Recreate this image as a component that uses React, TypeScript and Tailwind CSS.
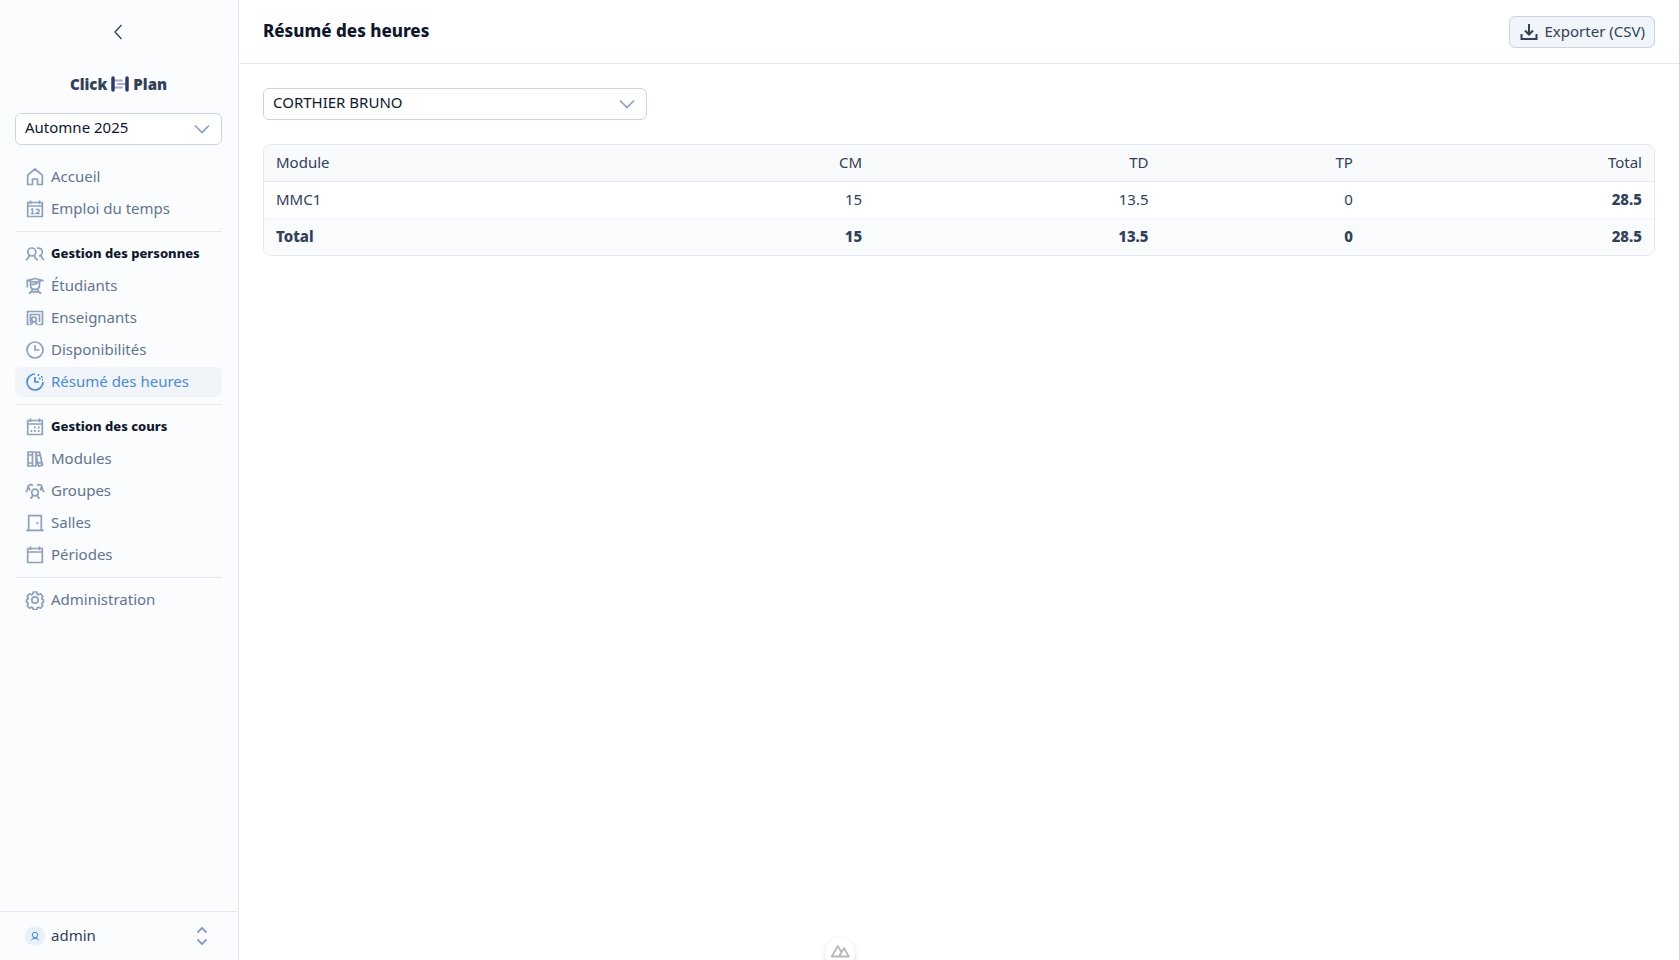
import type { ReactNode } from "react";

function Icon({ children, className = "size-5" }: { children: ReactNode; className?: string }) {
  return (
    <svg
      viewBox="0 0 20 20"
      fill="none"
      stroke="currentColor"
      strokeWidth="1.7"
      className={`shrink-0 ${className}`}
      aria-hidden="true"
    >
      {children}
    </svg>
  );
}

const calendarFrame = <path d="M2.700 3.500h14.600v14H2.700zM2.700 7h14.600M5.500 1.500v3.500M14.500 1.500v3.500" strokeLinejoin="round" />;

const icons = {
  home: <path d="M2.700 8.200L10 2l7.300 6.200v9.300H12.500v-5.500h-5v5.500H2.700z" strokeLinejoin="round" />,
  schedule: (
    <>
      {calendarFrame}
      <path d="M6 10.700l1.500-.7v5M5.800 14.500h3.400M11 11.300c0-1.500 3.200-1.500 3.200.2 0 1.200-1.800 1.800-3 3H14.700" strokeWidth="1.500" />
    </>
  ),
  people: (
    <>
      <circle cx="6.800" cy="8" r="4" />
      <path d="M4.200 11.300c-.4 2.600-1.500 3.800-3.500 4.700M9.400 11.300c.4 2.600 1.500 3.800 3.500 4.700M12 4.300c2.800-1 5.300 1 5.300 3.700 0 2.200-1.300 3.700-3.300 4M16 11.500c.4 2.400 1.300 3.600 3.300 4.500" />
    </>
  ),
  student: (
    <>
      <path d="M2 4.500L10 2.500l8 2-8 1.700zM2.300 5v6.500M5.500 5.500v4c0 5.200 9 5.200 9 0v-4" strokeLinejoin="round" />
      <path d="M5.800 8.200c2.500.5 5.500-.2 7-1.700M7.700 13c-.4 2.600-1.700 3.700-4 4.500M12.300 13c.4 2.600 1.700 3.700 4 4.500M7.500 16.700c1.500-1.400 3.500-1.400 5 0" />
    </>
  ),
  teacher: (
    <>
      <path d="M4.500 16.500h-2v-13h15v13h-4M5.500 15V6.500h9V14" strokeLinejoin="round" />
      <circle cx="9" cy="11.500" r="2.300" />
      <path d="M7.700 13.300c-.2 1.900-1 2.900-2.400 3.500M10.300 13.300c.2 1.900 1 2.900 2.400 3.500" />
    </>
  ),
  clock: (
    <>
      <circle cx="10" cy="10" r="8" />
      <path d="M10 5v5h4.500" />
    </>
  ),
  hours: (
    <>
      <path d="M10 2a8 8 0 1 0 8 8M10 5v5h4" />
      <path d="M12.700 3h1.500M14 6.700h1.500M16 4.800h1.500M17 7.700h1" strokeWidth="1.800" />
    </>
  ),
  courses: (
    <>
      {calendarFrame}
      <path d="M9 10.500h1.700M12.800 10.500h1.700M5.500 14h1.700M9 14h1.700M12.800 14h1.700" strokeWidth="1.800" />
    </>
  ),
  modules: (
    <path
      d="M3 3h4.500v14H3zM7.500 3h3.500v14H7.500M3 6h4.500M3 14h4.500M11 3.800l3.500-.8 3 13.200-4 .9-2.500-10.800M11.400 6.800l3.800-.8M13 14.100l3.800-.8"
      strokeLinejoin="round"
    />
  ),
  groups: (
    <>
      <circle cx="10" cy="11.500" r="3.300" />
      <path d="M7.800 13.800c-.2 2.100-1 3-2.600 3.700M12.200 13.800c.2 2.100 1 3 2.600 3.700M7.800 4.500C5.500 2.600 2.600 4.300 2.700 7c0 2.200-.5 3.200-2 4M5.200 9.300C4 8.600 3.600 7.500 4.600 6.400M12.200 4.500c2.300-1.900 5.200-.2 5.100 2.500 0 2.200.5 3.200 2 4M14.800 9.300c1.200-.7 1.600-1.800.6-2.900" />
    </>
  ),
  room: (
    <>
      <path d="M1.200 17.300h17.600M3.700 17.300V2.700h12.600v14.600" />
      <path d="M11.500 10.700l1.700-1.200" strokeWidth="2" />
    </>
  ),
  period: calendarFrame,
  settings: (
    <>
      <circle cx="10" cy="10" r="3.200" />
      <path
        d="M8.200 2h3.600l.5 2.200 1.300.6 2-1 2.200 2.400-1.100 1.900.5 1.300 1.300.4v2.400l-1.300.4-.5 1.300 1.100 1.900-2.200 2.400-2-1-1.300.6-.5 1.700H8.200l-.5-1.700-1.300-.6-2 1-2.200-2.400 1.100-1.900-.5-1.300L1.500 12.200V9.800l1.300-.4.5-1.300-1.100-1.900 2.200-2.400 2 1 1.300-.6z"
        strokeLinejoin="round"
      />
    </>
  ),
};

type Entry = { label: string; icon: ReactNode; active?: boolean };

const sections: { title?: string; icon?: ReactNode; entries: Entry[] }[] = [
  {
    entries: [
      { label: "Accueil", icon: icons.home },
      { label: "Emploi du temps", icon: icons.schedule },
    ],
  },
  {
    title: "Gestion des personnes",
    icon: icons.people,
    entries: [
      { label: "Étudiants", icon: icons.student },
      { label: "Enseignants", icon: icons.teacher },
      { label: "Disponibilités", icon: icons.clock },
      { label: "Résumé des heures", icon: icons.hours, active: true },
    ],
  },
  {
    title: "Gestion des cours",
    icon: icons.courses,
    entries: [
      { label: "Modules", icon: icons.modules },
      { label: "Groupes", icon: icons.groups },
      { label: "Salles", icon: icons.room },
      { label: "Périodes", icon: icons.period },
    ],
  },
  { entries: [{ label: "Administration", icon: icons.settings }] },
];

function SelectBox({ label, value, className = "" }: { label: string; value: string; className?: string }) {
  return (
    <div className={`relative ${className}`}>
      <select
        aria-label={label}
        className="block h-8 w-full appearance-none rounded-md border border-slate-300 bg-white pr-10 pb-1 pl-[9px] text-slate-900"
      >
        <option>{value}</option>
      </select>
      <Icon className="pointer-events-none absolute top-1.5 right-2.5 size-5 text-[#8fa0bd]">
        <path d="M3 6.500l7 7 7-7" />
      </Icon>
    </div>
  );
}

function Sidebar() {
  return (
    <aside className="flex w-[239px] shrink-0 flex-col border-r border-slate-200 bg-[#fbfcfe]">
      <div className="flex h-16 items-center justify-center pr-0.5">
        <button type="button" aria-label="Réduire le menu" className="text-slate-700">
          <Icon>
            <path d="M13.500 3L7 10l6.500 7" strokeWidth="1.300" />
          </Icon>
        </button>
      </div>
      <div className="flex flex-1 flex-col pr-4 pl-[15px]">
        <a href="#accueil" className="flex h-10 items-center justify-center gap-1 font-black text-slate-700">
          Click
          <svg viewBox="0 0 18 16" className="h-4 w-[18px]" aria-hidden="true">
            <path d="M4 4.500h7M7 8h8M4 11.500h7" stroke="#a3abd0" strokeWidth="1.800" strokeLinecap="round" />
            <path d="M2 2v12M16 2v12" stroke="#2f3b66" strokeWidth="3.500" strokeLinecap="round" />
          </svg>
          Plan
        </a>
        <SelectBox label="Semestre" value="Automne 2025" className="mt-[9px] mb-4" />
        <nav>
          {sections.map((section, i) => (
            <section key={i} className={i > 0 ? "mt-1.5 border-t border-slate-200 pt-1.5" : ""}>
              {section.title && (
                <h2 className="flex h-8 items-center gap-1.5 px-2.5 text-[13px] font-extrabold text-slate-900">
                  <Icon className="size-5 text-[#8fa0bd]">{section.icon}</Icon>
                  <span className="pb-0.5">{section.title}</span>
                </h2>
              )}
              <ul>
                {section.entries.map((entry) => (
                  <li key={entry.label} className="py-px">
                    <a
                      href="#"
                      className={`flex h-[30px] items-center gap-1.5 rounded-md px-2.5 ${
                        entry.active ? "bg-[#f1f5f9] text-[#4a8bd0]" : "text-slate-500"
                      }`}
                    >
                      <Icon className={entry.active ? "size-5" : "size-5 text-[#8fa0bd]"}>{entry.icon}</Icon>
                      <span className="pb-0.5">{entry.label}</span>
                    </a>
                  </li>
                ))}
              </ul>
            </section>
          ))}
        </nav>
      </div>
      <button
        type="button"
        className="flex h-[49px] items-center gap-1.5 border-t border-slate-200 pr-[26px] pl-[25px] text-slate-700"
      >
        <span className="flex size-5 items-center justify-center rounded-full bg-[#e8f0fa] text-[#4a8bd0]">
          <Icon className="size-2.5">
            <circle cx="10" cy="8" r="5.500" strokeWidth="2" />
            <path d="M7 12.500c-.5 3-2 4.500-4.500 5.500M13 12.500c.5 3 2 4.500 4.500 5.500M6 16c2-2 6-2 8 0" strokeWidth="2" />
          </Icon>
        </span>
        <span className="pb-0.5">admin</span>
        <Icon className="ml-auto size-5 text-[#8fa0bd]">
          <path d="M5.500 6.500L10 2l4.500 4.500M5.500 13.500L10 18l4.500-4.500" strokeWidth="2" />
        </Icon>
      </button>
    </aside>
  );
}

const headings = ["CM", "TD", "TP", "Total"];
const cell = "h-[37px] px-3 py-0 pb-0.5 text-right";
const rowLabel = "h-[37px] px-3 py-0 pb-0.5 text-left";

function HoursTable() {
  return (
    <div className="overflow-hidden rounded-lg border border-slate-200">
      <table className="w-full table-fixed text-slate-700">
        <colgroup>
          <col className="w-[23%]" />
          <col className="w-[20.9%]" />
          <col className="w-[20.6%]" />
          <col className="w-[14.7%]" />
          <col className="w-[20.8%]" />
        </colgroup>
        <thead className="bg-slate-50">
          <tr className="border-b border-slate-200">
            <th scope="col" className="h-9 px-3 pb-0.5 text-left font-normal">
              Module
            </th>
            {headings.map((heading) => (
              <th key={heading} scope="col" className="h-9 px-3 pb-0.5 text-right font-normal">
                {heading}
              </th>
            ))}
          </tr>
        </thead>
        <tbody>
          <tr className="border-b border-slate-100">
            <th scope="row" className={`${rowLabel} font-normal`}>
              MMC1
            </th>
            <td className={cell}>15</td>
            <td className={cell}>13.5</td>
            <td className={cell}>0</td>
            <td className={`${cell} font-extrabold`}>28.5</td>
          </tr>
        </tbody>
        <tfoot className="bg-[#fafbfd] font-extrabold">
          <tr>
            <th scope="row" className={`${rowLabel} font-extrabold`}>
              Total
            </th>
            <td className={cell}>15</td>
            <td className={cell}>13.5</td>
            <td className={cell}>0</td>
            <td className={cell}>28.5</td>
          </tr>
        </tfoot>
      </table>
    </div>
  );
}

export default function App() {
  return (
    <div className="flex min-h-screen bg-white font-['Noto_Sans',sans-serif] text-[15px] leading-5">
      <Sidebar />
      <main className="min-w-0 flex-1">
        <header className="flex h-16 items-center justify-between border-b border-slate-200 px-6">
          <h1 className="pb-0.5 text-[17px] font-extrabold text-slate-900">Résumé des heures</h1>
          <button
            type="button"
            className="flex h-8 items-center gap-1.5 rounded-md border border-slate-300 bg-slate-100 px-[9px] text-slate-700"
          >
            <Icon>
              <path d="M2.500 12v5h15v-5M10 2v10M6 8.500l4 4 4-4" strokeWidth="2" />
            </Icon>
            <span className="pb-0.5">Exporter (CSV)</span>
          </button>
        </header>
        <div className="flex flex-col gap-6 p-6">
          <SelectBox label="Enseignant" value="CORTHIER BRUNO" className="w-96" />
          <HoursTable />
        </div>
      </main>
      <button
        type="button"
        aria-label="Outils"
        className="fixed -bottom-2 left-1/2 flex size-8 -translate-x-1/2 items-center justify-center rounded-full border border-gray-100 bg-white text-[#b9b9b9] shadow-md"
      >
        <Icon className="size-5">
          <path d="M11 14.500H1.800L7.800 4l3.200 5.500M9 14.500l5-8.500 4.800 8.500z" strokeWidth="1.800" strokeLinejoin="round" />
        </Icon>
      </button>
    </div>
  );
}
